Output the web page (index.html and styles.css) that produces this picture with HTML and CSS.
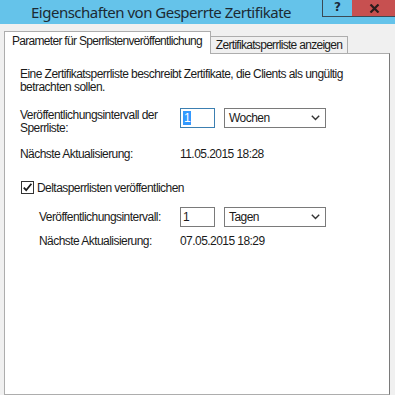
FILE: index.html
```html
<!DOCTYPE html>
<html lang="de">
<head>
<meta charset="utf-8">
<title>Eigenschaften von Gesperrte Zertifikate</title>
<link rel="stylesheet" href="styles.css">
</head>
<body>
<div class="window">
  <div class="titlebar">
    <div class="title">Eigenschaften von Gesperrte Zertifikate</div>
    <div class="tb-buttons">
      <div class="btn-help">?</div>
      <div class="btn-close">
        <svg width="11" height="9" viewBox="0 0 11 9"><path d="M1.5 0.5 L9.5 8.5 M9.5 0.5 L1.5 8.5" stroke="#2b1c1c" stroke-width="2.2" fill="none"/></svg>
      </div>
    </div>
  </div>
  <div class="tabs">
    <div class="tab active">Parameter für Sperrlistenveröffentlichung</div>
    <div class="tab">Zertifikatsperrliste anzeigen</div>
  </div>
  <div class="panel">
    <p class="desc">Eine Zertifikatsperrliste beschreibt Zertifikate, die Clients als ungültig betrachten sollen.</p>
    <div class="row interval">
      <div class="label">Veröffentlichungsintervall der Sperrliste:</div>
      <div class="input focused"><span class="sel">1</span></div>
      <div class="select"><span>Wochen</span><svg class="chev" width="9" height="6" viewBox="0 0 9 6"><path d="M0.8 0.8 L4.5 4.5 L8.2 0.8" stroke="#333" stroke-width="1.4" fill="none"/></svg></div>
    </div>
    <div class="row next">
      <div class="label">Nächste Aktualisierung:</div>
      <div class="value">11.05.2015 18:28</div>
    </div>
    <div class="check-row">
      <div class="checkbox"><svg width="11" height="11" viewBox="0 0 11 11"><path d="M1.8 5.6 L4.2 8.2 L9.4 1.8" stroke="#1a1a1a" stroke-width="1.8" fill="none"/></svg></div>
      <span>Deltasperrlisten veröffentlichen</span>
    </div>
    <div class="sub">
      <div class="row interval2">
        <div class="label">Veröffentlichungsintervall:</div>
        <div class="input"><span>1</span></div>
        <div class="select"><span>Tagen</span><svg class="chev" width="9" height="6" viewBox="0 0 9 6"><path d="M0.8 0.8 L4.5 4.5 L8.2 0.8" stroke="#333" stroke-width="1.4" fill="none"/></svg></div>
      </div>
      <div class="row next2">
        <div class="label">Nächste Aktualisierung:</div>
        <div class="value">07.05.2015 18:29</div>
      </div>
    </div>
  </div>
</div>
</body>
</html>
```
FILE: styles.css
```css
* { box-sizing: border-box; }
html, body { margin: 0; padding: 0; }
body {
  background: #f0f0f0;
  font-family: "Liberation Sans", Arial, sans-serif;
  font-size: 12px;
  color: #1a1a1a;
}
.window {
  height: 395px;
  display: flex;
  flex-direction: column;
  overflow: hidden;
}
.titlebar {
  height: 24px;
  flex: none;
  background: #65c3ea;
  display: flex;
  justify-content: space-between;
  align-items: flex-start;
}
.title {
  padding-left: 31px;
  padding-top: 3px;
  font-family: "Noto Sans", sans-serif;
  font-size: 15px;
  letter-spacing: -0.5px;
  line-height: 18px;
  color: #1c2a33;
}
.tb-buttons {
  display: flex;
}
.btn-help {
  width: 30px;
  height: 17px;
  border: 1px solid #3a4a55;
  border-top: none;
  border-right: none;
  font-weight: bold;
  font-size: 12px;
  line-height: 15px;
  text-align: center;
  color: #1a2a3a;
  font-family: "DejaVu Sans", sans-serif;
}
.btn-close {
  width: 43px;
  height: 17px;
  background: #c75050;
  border-bottom: 1px solid #3a4a55;
  display: flex;
  align-items: center;
  justify-content: center;
  padding-left: 2px;
}
.tabs {
  display: flex;
  align-items: flex-end;
  padding-left: 4px;
  margin-top: 7px;
  margin-bottom: -1px;
  flex: none;
}
.tab {
  height: 18px;
  padding: 0 5px 0 5px;
  border: 1px solid #adadad;
  border-bottom: none;
  border-left: none;
  background: #f0f0f0;
  line-height: 16px;
  white-space: nowrap;
  letter-spacing: -0.7px;
}
.tab.active {
  height: 23px;
  border-left: 1px solid #adadad;
  background: #fff;
  padding: 0 8px 0 7px;
  line-height: 19px;
  position: relative;
  z-index: 1;
}
.panel {
  flex: 1;
  margin: 0 5px 0 4px;
  background: #fff;
  border: 1px solid #adadad;
  border-right: 1px solid #7a7a7a;
  padding: 14px 0 0 15px;
  letter-spacing: -0.55px;
}
.desc {
  margin: 0;
  width: 368px;
  line-height: 13px;
}
.row {
  display: flex;
  align-items: flex-start;
}
.label {
  width: 160px;
  line-height: 13px;
}
.interval {
  margin-top: 14px;
}
.interval .label { padding-top: 1px; }
.input {
  width: 35px;
  height: 20px;
  border: 1px solid #7a7a7a;
  padding: 1px 0 0 2px;
  line-height: 16px;
  margin-right: 9px;
}
.input.focused {
  border-color: #3c7fb1;
}
.sel {
  background: #3399ff;
  color: #fff;
  padding: 0 1px;
}
.select {
  width: 102px;
  height: 20px;
  border: 1px solid #7a7a7a;
  display: flex;
  align-items: center;
  justify-content: space-between;
  padding: 0 5px 0 4px;
}
.chev { flex: none; }
.next {
  margin-top: 13px;
}
.value { line-height: 13px; }
.check-row {
  display: flex;
  align-items: center;
  margin-top: 20px;
  height: 13px;
}
.checkbox {
  width: 13px;
  height: 13px;
  border: 1px solid #333;
  margin-right: 3px;
  margin-left: 1px;
  display: flex;
  align-items: center;
  justify-content: center;
}
.sub {
  padding-left: 19px;
}
.interval2 {
  margin-top: 13px;
  align-items: center;
}
.interval2 .label { width: 141px; }
.next2 {
  margin-top: 8px;
}
.next2 .label { width: 141px; }
```
